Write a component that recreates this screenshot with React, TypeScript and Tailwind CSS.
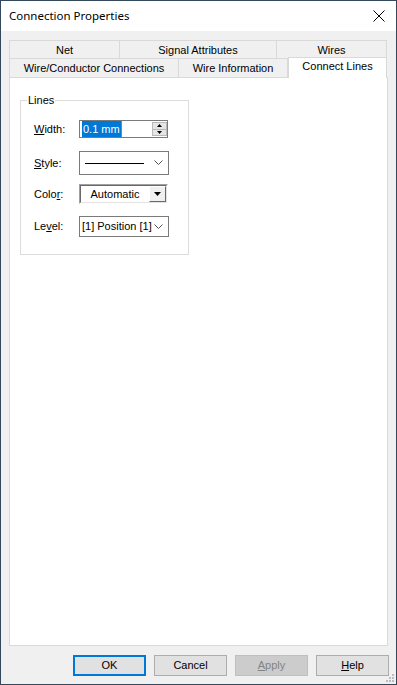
import React from "react";

const ui = { fontFamily: '"Liberation Sans", Arial, sans-serif' };

const Chevron = () => (
  <svg width="9" height="6" viewBox="0 0 9 6" className="shrink-0">
    <path d="M0.5 0.5 L4.5 4.5 L8.5 0.5" fill="none" stroke="#555" strokeWidth="1" />
  </svg>
);

const Tab = ({ label, w, selected }: { label: string; w: string; selected?: boolean }) => (
  <div
    className={
      selected
        ? `${w} h-[21px] -mt-[1px] -mb-[1px] relative z-10 bg-white border border-b-0 border-[#d9d9d9] flex items-center justify-center pb-[3px]`
        : `${w} h-full bg-[#f0f0f0] border border-b-0 border-[#d9d9d9] -ml-[1px] first:ml-0 flex items-center justify-center pt-[1px]`
    }
  >
    {label}
  </div>
);

const Btn = ({ children, kind }: { children: React.ReactNode; kind?: "default" | "disabled" }) => {
  const base = "w-[73px] h-[21px] flex items-center justify-center";
  if (kind === "default")
    return <div className={`${base} bg-[#e1e1e1] border-2 border-[#0078d7]`}>{children}</div>;
  if (kind === "disabled")
    return <div className={`${base} bg-[#cccccc] border border-[#bfbfbf] text-[#838383]`}>{children}</div>;
  return <div className={`${base} bg-[#e1e1e1] border border-[#adadad]`}>{children}</div>;
};

const App = () => {
  return (
    <div
      className="w-[397px] h-[685px] flex flex-col border border-[#34485c] bg-[#f0f0f0] text-[11px] text-black"
      style={ui}
    >
      {/* title bar */}
      <div className="h-[30px] bg-white flex items-center justify-between pl-[8px] pr-[8px] shrink-0">
        <span className="text-[11.5px] mt-[-1px]" style={{ fontFamily: '"Noto Sans", sans-serif' }}>
          Connection Properties
        </span>
        <svg width="12" height="12" viewBox="0 0 12 12" className="mr-[3px]">
          <path d="M0.5 0.5 L11.5 11.5 M11.5 0.5 L0.5 11.5" stroke="#000" strokeWidth="1" />
        </svg>
      </div>

      <div className="flex-1 flex flex-col pl-[8px] pr-[9px] pt-[9px] pb-[8px]">
        {/* tabs */}
        <div className="flex h-[18px]">
          <Tab label="Net" w="w-[111px]" />
          <Tab label="Signal Attributes" w="w-[158px]" />
          <Tab label="Wires" w="w-[111px]" />
        </div>
        <div className="flex h-[19px] items-end">
          <div className="flex h-[19px]">
            <Tab label="Wire/Conductor Connections" w="w-[170px]" />
            <Tab label="Wire Information" w="w-[110px]" />
          </div>
          <Tab label="Connect Lines" w="w-[100px]" selected />
        </div>

        {/* page */}
        <div className="flex-1 bg-white border border-[#d9d9d9] pl-[10px] pt-[16px] w-[379px]">
          <fieldset className="w-[169px] h-[161px] border border-[#dcdcdc]">
            <legend className="ml-[6px] px-[1px] leading-[13px]">Lines</legend>
            <div className="grid grid-cols-[45px_90px] items-center mt-[13px] px-[13px]">
              <span>
                <u>W</u>idth:
              </span>
              <div className="flex h-[18px] w-[89px]">
                <div className="w-[73px] h-[18px] border border-[#7a7a7a] border-r-0 bg-white flex items-center pl-[2px]">
                  <span className="bg-[#0078d7] text-white h-[16px] leading-[16px] pl-[1px] pr-[1px] border-r border-[#f7630c]">
                    0.1 mm
                  </span>
                </div>
                <div className="w-[17px] h-[18px] border border-[#7a7a7a] border-l-0 bg-white flex flex-col pl-[1px] py-[1px]">
                  <div className="flex-1 bg-[#e5e5e5] border border-[#b8b8b8] flex items-center justify-center">
                    <svg width="5" height="3" viewBox="0 0 5 3">
                      <path d="M2.5 0 L5 3 L0 3 Z" fill="#000" />
                    </svg>
                  </div>
                  <div className="flex-1 bg-[#e5e5e5] border border-t-0 border-[#b8b8b8] flex items-center justify-center">
                    <svg width="5" height="3" viewBox="0 0 5 3">
                      <path d="M0 0 L5 0 L2.5 3 Z" fill="#000" />
                    </svg>
                  </div>
                </div>
              </div>

              <span className="mt-[13px]">
                <u>S</u>tyle:
              </span>
              <div className="mt-[13px] w-[90px] h-[24px] border border-[#7a7a7a] bg-white flex items-center pl-[5px] pr-[5px] gap-[10px]">
                <div className="w-[61px] h-[1px] bg-black" />
                <Chevron />
              </div>

              <span className="mt-[9px]">
                Colo<u>r</u>:
              </span>
              <div className="mt-[9px] w-[89px] h-[20px] border border-t-[#a0a0a0] border-l-[#a0a0a0] border-r-white border-b-white">
                <div className="w-full h-full border border-t-[#696969] border-l-[#696969] border-r-[#e3e3e3] border-b-[#e3e3e3] bg-white flex">
                  <div className="flex-1 flex items-center justify-center">Automatic</div>
                  <div className="w-[17px] h-full bg-[#f0f0f0] border border-t-white border-l-white border-r-[#696969] border-b-[#696969] flex items-center justify-center">
                    <svg width="7" height="4" viewBox="0 0 7 4">
                      <path d="M0 0 L7 0 L3.5 4 Z" fill="#000" />
                    </svg>
                  </div>
                </div>
              </div>

              <span className="mt-[12px]">
                Le<u>v</u>el:
              </span>
              <div className="mt-[12px] w-[90px] h-[21px] border border-[#7a7a7a] bg-white flex items-center justify-between pl-[2px] pr-[5px]">
                <span>[1] Position [1]</span>
                <Chevron />
              </div>
            </div>
          </fieldset>
        </div>

        {/* buttons */}
        <div className="flex justify-end gap-[8px] mt-[9px] mr-[-2px]">
          <Btn kind="default">OK</Btn>
          <Btn>Cancel</Btn>
          <Btn kind="disabled">
            <span>
              <u>A</u>pply
            </span>
          </Btn>
          <Btn>
            <span>
              <u>H</u>elp
            </span>
          </Btn>
        </div>
      </div>
      <div className="h-0 relative">
        <svg width="10" height="10" viewBox="0 0 10 10" className="absolute right-[1px] bottom-[1px]">
          <rect x="7" y="1" width="2" height="2" fill="#bdbdbd" />
          <rect x="4" y="4" width="2" height="2" fill="#bdbdbd" />
          <rect x="7" y="4" width="2" height="2" fill="#bdbdbd" />
          <rect x="1" y="7" width="2" height="2" fill="#bdbdbd" />
          <rect x="4" y="7" width="2" height="2" fill="#bdbdbd" />
          <rect x="7" y="7" width="2" height="2" fill="#bdbdbd" />
        </svg>
      </div>
    </div>
  );
};

export default App;
